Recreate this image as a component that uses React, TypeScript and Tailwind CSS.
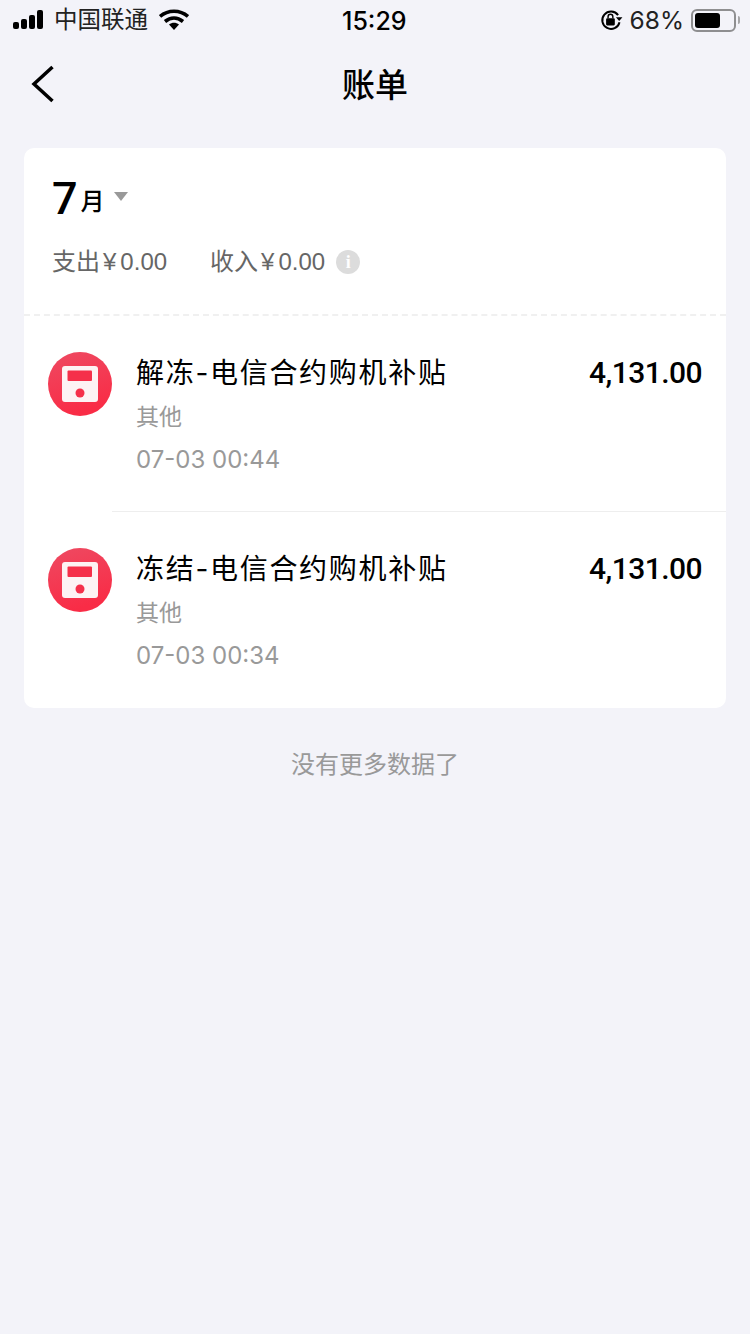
const sans = "font-['Inter','Noto_Sans_CJK_SC',sans-serif]";
const helvetica = "font-['Liberation_Sans','Noto_Sans_CJK_SC',sans-serif]";

const bills = [
  { title: "解冻-电信合约购机补贴", type: "其他", time: "07-03 00:44", amount: "4,131.00" },
  { title: "冻结-电信合约购机补贴", type: "其他", time: "07-03 00:34", amount: "4,131.00" },
];

function BillIcon() {
  return (
    <svg width="64" height="64" viewBox="0 0 64 64" className="shrink-0">
      <defs>
        <linearGradient id="billBg" x1="0" y1="0" x2="0.3" y2="1">
          <stop offset="0" stopColor="#ee4a62" />
          <stop offset="1" stopColor="#f92c46" />
        </linearGradient>
      </defs>
      <circle cx="32" cy="32" r="32" fill="url(#billBg)" />
      <rect x="14" y="14" width="36" height="36" rx="3" fill="#fdf3f4" />
      <rect x="19.5" y="18.5" width="24.5" height="10.5" rx="1" fill="#f5304a" />
      <circle cx="32" cy="41" r="4.5" fill="#f5304a" />
    </svg>
  );
}

function StatusBar() {
  return (
    <div className="relative flex h-[40px] items-center justify-between pl-[13px] pr-[10px] text-black">
      <div className="flex items-center">
        <div className="flex h-[18px] items-end gap-[2px]">
          <div className="h-[7px] w-[6px] rounded-[2px] bg-black" />
          <div className="h-[10px] w-[6px] rounded-[2px] bg-black" />
          <div className="h-[14px] w-[6px] rounded-[2px] bg-black" />
          <div className="h-[19px] w-[6px] rounded-[2px] bg-black" />
        </div>
        <span className="ml-[11px] text-[23.5px] leading-none text-[#222]">中国联通</span>
        <svg width="30" height="22" viewBox="0 0 30 22" className="ml-[11px]">
          <path d="M1 7.5C9 .5 21 .5 29 7.5" fill="none" stroke="#000" strokeWidth="3.6" />
          <path d="M6 12.5c5.5-4.5 12.500-4.500 18 0" fill="none" stroke="#000" strokeWidth="3.600" />
          <path d="M10 15.500c3-2.200 7-2.200 10 0L15 21z" fill="#000" />
        </svg>
      </div>
      <span className="absolute left-[342px] top-[7px] text-[25px] font-medium leading-[28px]">15:29</span>
      <div className="flex items-center">
        <svg width="24" height="24" viewBox="0 0 22 22" className="mr-[7px]">
          <path d="M17.500 6.500A8 8 0 1 0 18.800 13" fill="none" stroke="#000" strokeWidth="1.800" />
          <path d="M15.500 8.500h6l-3 3.500z" fill="#000" />
          <rect x="6.500" y="9.500" width="8" height="6.500" rx="1" fill="#000" />
          <path d="M8.300 9.500V8a2.200 2.200 0 0 1 4.400 0v1.500" fill="none" stroke="#000" strokeWidth="1.300" />
        </svg>
        <span className="text-[24.5px] leading-none text-[#222]">68%</span>
        <div className="ml-[7px] flex h-[23px] w-[45px] items-center rounded-[6px] border-2 border-[#8e8e90] p-[2px]">
          <div className="h-[15px] w-[25px] rounded-[3px] bg-black" />
        </div>
        <div className="ml-[2px] h-[8px] w-[2px] rounded-r-[2px] bg-[#a5a5a7]" />
      </div>
    </div>
  );
}

function BillRow({ bill, last }: { bill: (typeof bills)[number]; last: boolean }) {
  return (
    <div className="flex h-[196px] flex-col pl-[24px]">
      <div className="flex flex-1 pt-[36px]">
        <BillIcon />
        <div className="ml-[24px] flex flex-1 justify-between pr-[24px]">
          <div>
            <div className="text-[28px] leading-[42px] tracking-[1.7px] text-black">{bill.title}</div>
            <div className="mt-[6px] text-[23px] leading-[34px] text-[#999]">{bill.type}</div>
            <div className="mt-[8px] text-[24px] leading-[36px] text-[#999]">{bill.time}</div>
          </div>
          <div className="font-['Roboto',sans-serif] text-[30px] font-medium leading-[42px] tracking-[-0.55px] text-black">
            {bill.amount}
          </div>
        </div>
      </div>
      {!last && <div className="ml-[64px] h-px bg-[#eeeeee]" />}
    </div>
  );
}

export default function App() {
  return (
    <div className={`min-h-[1334px] bg-[#f3f3f9] ${sans}`}>
      <StatusBar />

      <div className="relative flex h-[88px] items-center justify-center">
        <svg width="26" height="38" viewBox="0 0 26 38" className="absolute left-[30px] top-[25px]">
          <path d="M22.500 2 4 19l18.500 17" fill="none" stroke="#000" strokeWidth="3.500" />
        </svg>
        <h1 className="pt-[2px] text-[33px] font-medium leading-none text-black">账单</h1>
      </div>

      <div className="mx-[24px] mt-[20px] overflow-hidden rounded-[10px] bg-white">
        <div className="h-[168px] border-b-2 border-dashed border-[#f0f0f0] px-[28px] pt-[24px]">
          <div className="flex items-center">
            <span className="font-['Roboto',sans-serif] text-[45px] font-medium leading-[54px] text-black">7</span>
            <span className="ml-[3px] mt-[5px] text-[24px] font-medium leading-[40px] text-black">月</span>
            <div className="mb-[6px] ml-[9px] h-0 w-0 border-x-[7px] border-t-[9px] border-x-transparent border-t-[#999]" />
          </div>
          <div className={`mt-[18px] flex items-center text-[24px] leading-[36px] text-[#666] ${helvetica}`}>
            <span>
              支出<span className="ml-[3px] mr-[4px]">¥</span>0.00
            </span>
            <span className="ml-[43px]">
              收入<span className="ml-[3px] mr-[4px]">¥</span>0.00
            </span>
            <span className="ml-[11px] flex h-[24px] w-[24px] items-center justify-center rounded-full bg-[#dcdcdc] font-['Liberation_Serif',serif] text-[18px] font-bold leading-none text-white">
              i
            </span>
          </div>
        </div>
        {bills.map((bill, i) => (
          <BillRow key={bill.title} bill={bill} last={i === bills.length - 1} />
        ))}
      </div>

      <div className="mt-[39px] text-center text-[24px] leading-[36px] text-[#999]">没有更多数据了</div>
    </div>
  );
}
